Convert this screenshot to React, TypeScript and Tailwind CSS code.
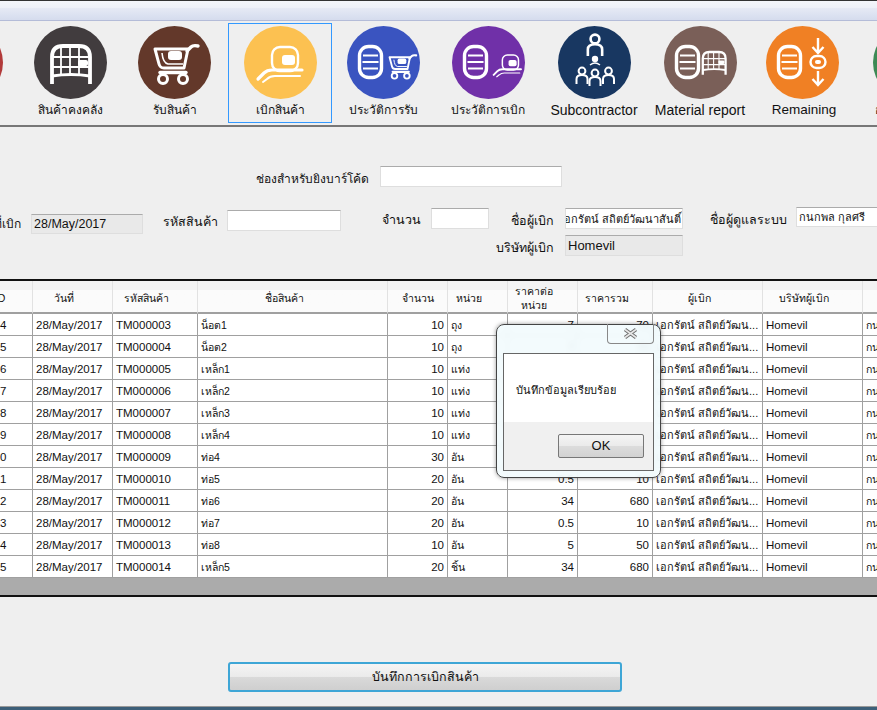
import React from "react";

const FONT = "font-['Liberation_Sans','Noto_Sans','DejaVu_Sans',sans-serif]";

const Capsule = () => (
  <g fill="none" stroke="#fff">
    <rect x="12.5" y="20.5" width="22" height="31" rx="9" strokeWidth="3.4" />
    <path d="M16 29.5H31M15.5 36H31.5M16 42.5H31" strokeWidth="2" />
  </g>
);

const Cart = ({ x = 0, y = 0, s = 1, fill }: { x?: number; y?: number; s?: number; fill: string }) => (
  <g transform={`translate(${x} ${y}) scale(${s})`} fill="none" stroke="#fff">
    <path d="M17 23H50L46 42H26Q22 42 21 38Z" strokeWidth="3" strokeLinejoin="round" />
    <path d="M24 27Q25 37 30 38H45" strokeWidth="1.6" />
    <path d="M49 25L53 21Q55 19 60 20" strokeWidth="3.4" strokeLinecap="round" />
    <path d="M22 46.5H48" strokeWidth="3.4" strokeLinecap="round" />
    <rect x="30" y="25" width="14" height="9" rx="3" fill="#fff" stroke="none" />
    <circle cx="25" cy="53" r="4.5" strokeWidth="3" fill={fill} />
    <circle cx="45" cy="53" r="4.5" strokeWidth="3" fill={fill} />
  </g>
);

const Shelf = ({ x = 0, y = 0, s = 1 }: { x?: number; y?: number; s?: number }) => (
  <g transform={`translate(${x} ${y}) scale(${s})`} fill="none" stroke="#fff">
    <path d="M18 58V31Q18 20 29 20H45Q56 20 56 31V58" strokeWidth="3.8" />
    <path d="M18 50Q37 47 56 50" strokeWidth="3.2" />
    <path d="M18 31H56M18 41H56M27 20V49M36 20V48M45 20V49" strokeWidth="1.8" />
    <rect x="44" y="34" width="10" height="6" rx="2" fill="#fff" stroke="none" />
  </g>
);

const Hand = ({ x = 0, y = 0, s = 1 }: { x?: number; y?: number; s?: number }) => (
  <g transform={`translate(${x} ${y}) scale(${s})`} fill="none" stroke="#fff">
    <rect x="28" y="21" width="26" height="24" rx="8" strokeWidth="2.4" />
    <rect x="38" y="29" width="13" height="10" rx="3" fill="#fff" stroke="none" />
    <path d="M58 44H28Q23 44 20 47L14 53" strokeWidth="3.2" strokeLinecap="round" />
    <path d="M56 50H31Q26 50 23 53L19 56" strokeWidth="2" strokeLinecap="round" />
  </g>
);

const Person = ({ x, y, s = 1 }: { x: number; y: number; s?: number }) => (
  <g transform={`translate(${x} ${y}) scale(${s})`} fill="none" stroke="#fff" strokeWidth="2">
    <circle cx="0" cy="0" r="3.4" />
    <path d="M-5.5 13V8Q-5.5 4 0 4Q5.5 4 5.5 8V13" />
  </g>
);

const icons: { color: string; art: React.ReactNode }[] = [
  { color: "#b23a3a", art: null },
  { color: "#413c3e", art: <Shelf /> },
  { color: "#63382a", art: <Cart fill="#63382a" /> },
  { color: "#fcc151", art: <Hand /> },
  { color: "#3a54c0", art: (<><Capsule /><Cart x={32} y={17} s={0.62} fill="#3a54c0" /></>) },
  { color: "#7030a8", art: (<><Capsule /><Hand x={33} y={16} s={0.62} /></>) },
  {
    color: "#183761",
    art: (
      <g>
        <Person x={37} y={13} s={1.3} />
        <circle cx="37" cy="33" r="3.2" fill="#fff" />
        <path d="M32 39Q37 35 42 39" fill="none" stroke="#fff" strokeWidth="1.4" />
        <Person x={24} y={45} />
        <Person x={37} y={47} />
        <Person x={50.5} y={45} />
      </g>
    ),
  },
  { color: "#7a5f58", art: (<><Capsule /><Shelf x={28} y={14} s={0.6} /></>) },
  {
    color: "#f08024",
    art: (
      <g fill="none" stroke="#fff">
        <Capsule />
        <path d="M52 12V26M46.5 21L52 27L57.5 21" strokeWidth="2.4" />
        <rect x="44.5" y="30" width="15" height="12" rx="6" strokeWidth="2.4" />
        <rect x="49" y="34" width="6" height="4" rx="2" fill="#fff" stroke="none" />
        <path d="M52 45V59M46.5 53L52 59L57.5 53" strokeWidth="2.4" />
      </g>
    ),
  },
  { color: "#3d8a55", art: null },
];

const tools = [
  { label: "", w: "w-[105px]", size: "text-[12px]" },
  { label: "สินค้าคงคลัง", w: "w-[102px]", size: "text-[12px]" },
  { label: "รับสินค้า", w: "w-[107px]", size: "text-[12px]" },
  { label: "เบิกสินค้า", w: "w-[104px]", size: "text-[12px]", active: true },
  { label: "ประวัติการรับ", w: "w-[102px]", size: "text-[12px]" },
  { label: "ประวัติการเบิก", w: "w-[108px]", size: "text-[12px]" },
  { label: "Subcontractor", w: "w-[104px]", size: "text-[14px]" },
  { label: "Material report", w: "w-[108px]", size: "text-[14px]" },
  { label: "Remaining", w: "w-[96px]", size: "text-[13.5px] ml-[4px]" },
  { label: "ออกจากระบบ", w: "w-[119px]", size: "text-[12px]" },
];

const rows = [
  ["14", "TM000003", "น็อต1", "10", "ถุง", "7", "70"],
  ["15", "TM000004", "น็อต2", "10", "ถุง", "7", "70"],
  ["16", "TM000005", "เหล็ก1", "10", "แท่ง", "34", "340"],
  ["17", "TM000006", "เหล็ก2", "10", "แท่ง", "34", "340"],
  ["18", "TM000007", "เหล็ก3", "10", "แท่ง", "34", "340"],
  ["19", "TM000008", "เหล็ก4", "10", "แท่ง", "34", "340"],
  ["20", "TM000009", "ท่อ4", "30", "อัน", "0.5", "15"],
  ["21", "TM000010", "ท่อ5", "20", "อัน", "0.5", "10"],
  ["22", "TM000011", "ท่อ6", "20", "อัน", "34", "680"],
  ["23", "TM000012", "ท่อ7", "20", "อัน", "0.5", "10"],
  ["24", "TM000013", "ท่อ8", "10", "อัน", "5", "50"],
  ["25", "TM000014", "เหล็ก5", "20", "ชิ้น", "34", "680"],
];

const headers = [
  { t: "ID", pad: "px-[2px]", w: "w-[65px]" },
  { t: "วันที่", pad: "pr-[17px]", w: "w-[80px]" },
  { t: "รหัสสินค้า", pad: "pr-[17px]", w: "w-[85px]" },
  { t: "ชื่อสินค้า", pad: "pr-[17px]", w: "w-[190px]" },
  { t: "จำนวน", pad: "px-[2px]", w: "w-[60px]" },
  { t: "หน่วย", pad: "pr-[17px]", w: "w-[60px]" },
  { t: "ราคาต่อ หน่วย", pad: "pr-[17px]", w: "w-[70px]" },
  { t: "ราคารวม", pad: "pr-[17px]", w: "w-[75px]" },
  { t: "ผู้เบิก", pad: "pr-[17px]", w: "w-[110px]" },
  { t: "บริษัทผู้เบิก", pad: "pr-[17px]", w: "w-[100px]" },
  { t: "", pad: "px-[2px]", w: "w-[100px]" },
];

const cell = "h-[22px] border-r border-b border-[#a0a0a0] px-[3px] whitespace-nowrap overflow-hidden leading-[20px] text-[#111]";
const latin = `${cell} text-[11.5px]`;
const thai = `${cell} text-[10.5px]`;
const person = `${cell} text-[11px]`;
const box = "h-[21px] border border-[#dedede] border-t-[#ababab] bg-white shrink-0";
const labelBase = "leading-[20px] text-[#111] whitespace-nowrap text-right shrink-0";
const label = `${labelBase} text-[12.5px]`;
const labelSmall = `${labelBase} text-[12px]`;

export default function App() {
  return (
    <div className={`${FONT} relative w-[877px] h-[710px] overflow-hidden bg-[#efefef]`}>
      {/* window title strips */}
      <div className="h-[1px] bg-[#333]" />
      <div className="h-[7px] bg-gradient-to-b from-[#f4f6fa] to-[#eef1f8]" />
      <div className="h-[13px] border-b border-[#b4bcd8] bg-gradient-to-b from-[#e6eaf5] to-[#d5dcee]" />

      {/* toolbar */}
      <div className="flex h-[106px] border-b-2 border-[#777] pt-[2px] ml-[-86px] w-[1100px]">
        {tools.map((t, i) => (
          <div key={i} className={`${t.w} h-[100px] flex flex-col items-center shrink-0 ${t.active ? "border border-[#3399ff]" : "border border-transparent"}`}>
            <svg width="73" height="73" viewBox="0 0 73 73" className="mt-[2px] shrink-0">
              <circle cx="36.5" cy="36.5" r="36.5" fill={icons[i].color} />
              {icons[i].art}
            </svg>
            <span className={`mt-[1px] ${t.size} leading-[20px] text-[#111] whitespace-nowrap`}>{t.label}</span>
          </div>
        ))}
      </div>

      {/* form */}
      <div className="h-[152px] pt-[39px]">
        <div className="flex items-start h-[21px] pl-[255px]">
          <span className={`${labelSmall} w-[114px] pt-[3px]`}>ช่องสำหรับยิงบาร์โค้ด</span>
          <div className={`${box} ml-[11px] w-[182px]`} />
        </div>
        <div className="flex items-start mt-[20px]">
          <div className="mt-[7px] flex items-center shrink-0">
            <div className="w-[21px] overflow-hidden flex justify-end">
              <span className={labelSmall}>วันที่เบิก</span>
            </div>
            <div className="ml-[10px] w-[112px] h-[20px] border border-[#dedede] border-t-[#ababab] bg-[#e9e9e9] px-[2px] text-[12.5px] leading-[19px] text-[#111]">28/May/2017</div>
          </div>
          <div className="ml-[20px] mt-[3px] flex items-start h-[21px] shrink-0">
            <span className={`${label} w-[53px] pt-[2px]`}>รหัสสินค้า</span>
            <div className={`${box} ml-[11px] w-[114px]`} />
          </div>
          <div className="ml-[41px] mt-[1px] flex items-start h-[21px] shrink-0">
            <span className={`${label} w-[38px] pt-[2px]`}>จำนวน</span>
            <div className={`${box} ml-[11px] w-[58px]`} />
          </div>
          <div className="ml-[5px] mt-[1px] w-[189px] flex flex-col gap-[6px] shrink-0">
            <div className="flex items-start h-[21px]">
              <span className={`${label} flex-1 pt-[3px]`}>ชื่อผู้เบิก</span>
              <div className={`${box} ml-[11px] w-[118px] overflow-hidden flex justify-end px-[1px] text-[11px] leading-[20px] whitespace-nowrap text-[#111]`}>
                <span className="shrink-0">เอกรัตน์ สถิตย์วัฒนาสันติ์</span>
              </div>
            </div>
            <div className="flex items-start h-[21px]">
              <span className={`${label} flex-1 pt-[3px]`}>บริษัทผู้เบิก</span>
              <div className="ml-[11px] w-[118px] h-[21px] border border-[#dedede] border-t-[#ababab] bg-[#e9e9e9] px-[2px] text-[13px] leading-[19px] text-[#111] shrink-0">Homevil</div>
            </div>
          </div>
          <div className="ml-[27px] flex items-start h-[21px] shrink-0">
            <span className={`${label} w-[75px] pt-[3px]`}>ชื่อผู้ดูแลระบบ</span>
            <div className="ml-[11px] w-[100px] h-[20px] border border-[#dedede] border-t-[#ababab] bg-white shrink-0 px-[2px] text-[11px] leading-[19px] text-[#111] whitespace-nowrap">กนกพล กุลศรี</div>
          </div>
        </div>
      </div>

      {/* grid */}
      <div className="border-t-2 border-[#111] h-[318px] border-b-2 border-b-[#111] bg-[#ababab] overflow-hidden">
        <table className="table-fixed border-separate border-spacing-0 ml-[-32px] w-[995px]">
          <colgroup>
            {headers.map((h, i) => (
              <col key={i} className={h.w} />
            ))}
          </colgroup>
          <thead>
            <tr>
              {headers.map((h, i) => (
                <th key={i} className={`h-[33px] border-r border-[#e2e2e2] border-b-2 border-b-[#a0a0a0] bg-gradient-to-b from-[#f3f3f3] from-30% to-[#fbfbfb] to-30% text-[10.5px] leading-[14px] font-normal text-[#111] text-center pt-[2px] whitespace-normal ${h.pad}`}>
                  {h.t}
                </th>
              ))}
            </tr>
          </thead>
          <tbody>
            {rows.map((r) => (
              <tr key={r[0]} className="bg-white">
                <td className={`${latin} text-center`}>{r[0]}</td>
                <td className={latin}>28/May/2017</td>
                <td className={latin}>{r[1]}</td>
                <td className={thai}>{r[2]}</td>
                <td className={`${latin} text-right`}>{r[3]}</td>
                <td className={thai}>{r[4]}</td>
                <td className={`${latin} text-right`}>{r[5]}</td>
                <td className={`${latin} text-right`}>{r[6]}</td>
                <td className={person}>เอกรัตน์ สถิตย์วัฒน...</td>
                <td className={latin}>Homevil</td>
                <td className={thai}>กนกพล กุลศรี</td>
              </tr>
            ))}
          </tbody>
        </table>
      </div>

      {/* footer */}
      <div className="h-[109px] pt-[65px] pl-[228px]">
        <button className="w-[394px] h-[30px] rounded-[3px] border-2 border-[#3ea6d6] bg-[linear-gradient(#f4f4f4,#ebebeb_48%,#d9d9d9_52%,#cfcfcf)] text-[12.5px] pt-[1px] text-[#111]">
          บันทึกการเบิกสินค้า
        </button>
      </div>
      <div className="h-[1px] bg-[#999]" />
      <div className="h-[3px] bg-[#3d5f78]" />

      {/* message box */}
      <div className="absolute left-[496px] top-[324px] w-[165px] h-[154px] rounded-[8px] border border-[#444] bg-[#f2fbfd]/90 backdrop-blur-[3px] shadow-[0_0_4px_rgba(0,0,0,0.4)] px-[6px] pt-[28px]">
        <div className="absolute top-[-1px] right-[6px] w-[47px] h-[20px] rounded-b-[4px] border border-t-0 border-[#888] flex items-center justify-center">
          <svg width="15" height="11" viewBox="0 0 15 11">
            <path d="M2 1.5L13 9.5M13 1.5L2 9.5" stroke="#6f6f6f" strokeWidth="3.6" />
            <path d="M2 1.5L13 9.5M13 1.5L2 9.5" stroke="#e8e8e8" strokeWidth="1.6" />
          </svg>
        </div>
        <div className="h-[118px] border border-[#666] flex flex-col">
          <div className="h-[68px] bg-white pl-[12px] pt-[26px] text-[11px] leading-[20px] text-[#111]">บันทึกข้อมูลเรียบร้อย</div>
          <div className="flex-1 bg-[#f0f0f0] flex justify-end items-start pt-[12px] pr-[9px]">
            <button className="w-[86px] h-[24px] rounded-[2px] border border-[#777] bg-[linear-gradient(#f4f4f4,#ebebeb_48%,#dcdcdc_52%,#d2d2d2)] text-[13px] leading-[20px] text-[#111]">OK</button>
          </div>
        </div>
      </div>
    </div>
  );
}
